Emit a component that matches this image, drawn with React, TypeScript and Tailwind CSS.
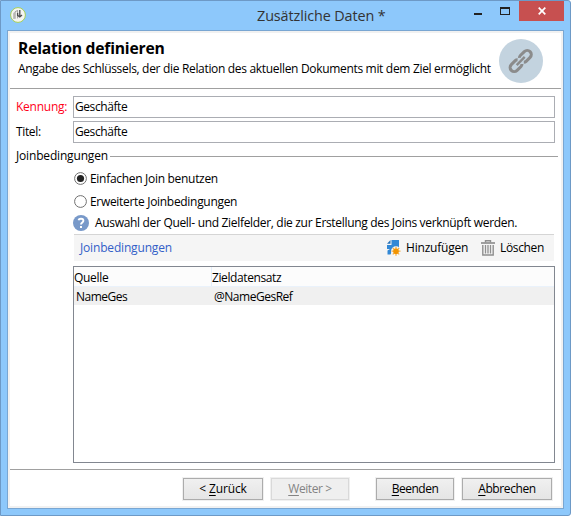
import type { ReactNode } from "react";

function LogoIcon() {
  return (
    <svg className="block h-4 w-4" viewBox="0 0 16 16">
      <circle cx="8" cy="8" r="7.4" fill="#f5f5f1" stroke="#a5cf55" />
      <path d="M3.2 12V6.2l2.6-2.4v8z" fill="#b7b7b4" />
      <path d="M5.2 4.8L7.6 3.4v8" fill="none" stroke="#8a8a8a" strokeWidth="0.8" />
      <path d="M9.8 3v6.2M12 8l-2.2 2-2.2-1.6V6" fill="none" stroke="#4c4c4c" strokeWidth="1.3" />
    </svg>
  );
}

function LinkIcon() {
  return (
    <svg className="block h-11 w-11" viewBox="0 0 44 44">
      <circle cx="22" cy="22" r="22" fill="#c3d3df" />
      <g transform="rotate(-45 21.7 22)" fill="none" stroke="#8b8b8b" strokeWidth="3">
        <path d="M20.4 18.9c-.6-.7-1.4-1-2.3-1h-5.6a4.1 4.1 0 0 0 0 8.2h5.6c.9 0 1.7-.4 2.3-1" />
        <path d="M23 18.9c.6-.7 1.4-1 2.3-1h5.6a4.1 4.1 0 0 1 0 8.2h-5.6c-.9 0-1.7-.4-2.3-1" />
        <path d="M16 22h11.4" strokeWidth="2.4" />
      </g>
    </svg>
  );
}

function AddIcon() {
  return (
    <svg className="block h-4 w-[14px]" viewBox="0 0 14 16">
      <path d="M4.5 0H12v8.2H6.5L3.5 14.5H0.5V10.5L3 9H0V5h4.5z" fill="#3288d6" />
      <path d="M0 3.7L3.5 0v3.7z" fill="#2872b7" />
      <circle cx="9" cy="11.2" r="5" fill="#f6f6f6" />
      <path d="M9 6.7v9M4.5 11.2h9M5.8 8l6.4 6.4M12.2 8l-6.4 6.4" stroke="#f4ae43" strokeWidth="1.3" />
      <circle cx="9" cy="11.2" r="2.8" fill="#f29400" />
    </svg>
  );
}

function TrashIcon() {
  return (
    <svg className="block h-4 w-[14px]" viewBox="0 0 14 16" fill="none" stroke="#8f8f8f">
      <path d="M0 3h14" strokeWidth="1.7" />
      <path d="M4.5 2.5V.8h5v1.7" strokeWidth="1.4" />
      <path d="M1.8 5v10h10.4V5" strokeWidth="1.4" />
      <path d="M4.5 5v8.5M7 5v8.5M9.5 5v8.5" strokeWidth="1.3" />
    </svg>
  );
}

function HelpIcon() {
  return (
    <svg className="block h-4 w-4" viewBox="0 0 16 16">
      <circle cx="8" cy="8" r="8" fill="#7899c9" />
      <path d="M5.5 5.2C6 3.2 10.4 3.1 10.4 5.8 10.4 7.5 8 7.5 8 9.5" fill="none" stroke="#fff" strokeWidth="1.9" />
      <path d="M7 11h2v2H7z" fill="#fff" />
    </svg>
  );
}

function Radio({ checked = false }: { checked?: boolean }) {
  return (
    <svg className="block h-[13px] w-[13px]" viewBox="0 0 13 13">
      <circle cx="6.5" cy="6.5" r="5.9" fill="#fff" stroke="#707070" />
      {checked && <circle cx="6.5" cy="6.5" r="3.6" fill="#222" />}
    </svg>
  );
}

function Field({ label, value, labelClass }: { label: string; value: string; labelClass: string }) {
  return (
    <div className="flex h-[22px]">
      <span className={`w-[63px] shrink-0 pl-[6px] leading-[21px] ${labelClass}`}>{label}</span>
      <div className="w-[482px] border border-[#abadb3] pl-px leading-[19px] tracking-[-0.42px]">{value}</div>
    </div>
  );
}

function Button({ children, className, disabled = false }: { children: ReactNode; className: string; disabled?: boolean }) {
  const look = disabled
    ? "border-[#d9d9d9] bg-[#efefef] text-[#838383]"
    : "border-[#acacac] bg-gradient-to-b from-[#f0f0f0] to-[#e5e5e5] text-black";
  return (
    <button className={`h-[22px] shrink-0 border text-center leading-[20px] outline-1 outline-[#f0f0f0] ${look} ${className}`}>
      {children}
    </button>
  );
}

function Key({ children }: { children: string }) {
  return <span className="underline decoration-1 underline-offset-2">{children}</span>;
}

export default function App() {
  return (
    <div className="h-[517px] w-[571px] overflow-hidden bg-white font-['Open_Sans','Noto_Sans',sans-serif] text-[12px] whitespace-nowrap text-black">
      <div className="flex h-[516px] w-[571px] flex-col rounded-tr-[3px] rounded-br-[3px] border border-[#6d99c6] bg-[#8dc8fb] px-[6px] pb-[6px]">
        <header className="flex h-[29px] shrink-0">
          <div className="w-[250px] pt-[6px] pl-[3px]"><LogoIcon /></div>
          <h1 className="w-[209px] pt-[3px] text-[14.4px] leading-[24px] tracking-[-0.11px] text-[#333]">Zusätzliche Daten *</h1>
          <div className="flex w-[53px] gap-[18px] pl-[8px]">
            <span className="mt-[12px] h-[2px] w-2 shrink-0 bg-[#222]" />
            <span className="mt-[6px] h-2 w-[10px] shrink-0 border border-t-2 border-[#222]" />
          </div>
          <div className="flex h-5 w-[45px] shrink-0 items-center justify-center bg-[#c75050]">
            <svg className="h-2 w-2" viewBox="0 0 8 8"><path d="M.7.7l6.6 6.6M7.3.7L.7 7.3" stroke="#fff" strokeWidth="1.7" /></svg>
          </div>
        </header>
        <main className="flex h-[479px] w-[557px] flex-col border border-[#79a6d2] bg-white">
          <div className="flex h-[477px] flex-col border-2 border-[#f1f1f1]">
            <section className="flex h-14 shrink-0 border-b border-[#a0a0a0] pl-2">
              <div className="w-[481px] pt-[4px]">
                <h2 className="text-[15.7px] leading-[23px] font-bold tracking-[-0.22px]">Relation definieren</h2>
                <p className="leading-[18px] tracking-[-0.32px]">Angabe des Schlüssels, der die Relation des aktuellen Dokuments mit dem Ziel ermöglicht</p>
              </div>
              <div className="pt-[6px]"><LinkIcon /></div>
            </section>
            <section className="flex flex-col gap-[3px] pt-[7px]">
              <Field label="Kennung:" value="Geschäfte" labelClass="tracking-[-0.25px] text-[#ff0019]" />
              <Field label="Titel:" value="Geschäfte" labelClass="tracking-[-0.35px]" />
            </section>
            <div className="mt-px flex h-[24px] items-center gap-[2px] pl-[6px]">
              <span className="w-[92px] leading-[18px] tracking-[-0.17px]">Joinbedingungen</span>
              <span className="h-px w-[448px] bg-[#a0a0a0]" />
            </div>
            <section className="-mt-px ml-[63px] flex w-[482px] flex-col self-start">
              <label className="flex h-[23px] items-center gap-[3px] pl-px"><Radio checked /><span className="tracking-[-0.3px]">Einfachen Join benutzen</span></label>
              <label className="flex h-[23px] items-center gap-[3px] pl-px"><Radio /><span className="tracking-[-0.31px]">Erweiterte Joinbedingungen</span></label>
              <div className="flex h-[20px] items-center gap-[6px]"><HelpIcon /><span className="tracking-[-0.32px]">Auswahl der Quell- und Zielfelder, die zur Erstellung des Joins verknüpft werden.</span></div>
              <div className="mx-px mt-px flex h-[27px] items-center border-t border-[#d5d5d5] bg-[#f5f5f5] pl-[6px] leading-[20px]">
                <span className="w-[307px] tracking-[-0.17px] text-[#3260c8]">Joinbedingungen</span>
                <AddIcon />
                <span className="w-[80px] pl-[5px] tracking-[-0.2px]">Hinzufügen</span>
                <TrashIcon />
                <span className="pl-[5px] tracking-[-0.35px]">Löschen</span>
              </div>
              <div className="mt-[5px] h-[197px] border border-[#828790]">
                <div className="flex h-5 border-b border-[#eaf2fb] bg-[#fcfcfc] leading-[21px]">
                  <span className="w-[138px] border-r border-[#e3eefa] tracking-[-0.3px]">Quelle</span>
                  <span className="tracking-[-0.4px]">Zieldatensatz</span>
                </div>
                <div className="flex h-[18px] bg-[#f0f0f0] leading-[20px]">
                  <span className="w-[140px] pl-[2px] tracking-[-0.5px]">NameGes</span>
                  <span className="tracking-[-0.48px]">@NameGesRef</span>
                </div>
              </div>
            </section>
            <footer className="mt-[6px] flex border-t border-[#a0a0a0] pt-2 pl-[173px]">
              <Button className="w-[80px] tracking-[-0.15px]">&lt; <Key>Z</Key>urück</Button>
              <Button className="ml-2 w-[78px] tracking-[-0.4px]" disabled><Key>W</Key>eiter &gt;</Button>
              <Button className="ml-[27px] w-[78px] tracking-[-0.5px]"><Key>B</Key>eenden</Button>
              <Button className="ml-2 w-[90px] tracking-[-0.4px]"><Key>A</Key>bbrechen</Button>
            </footer>
          </div>
        </main>
      </div>
    </div>
  );
}
